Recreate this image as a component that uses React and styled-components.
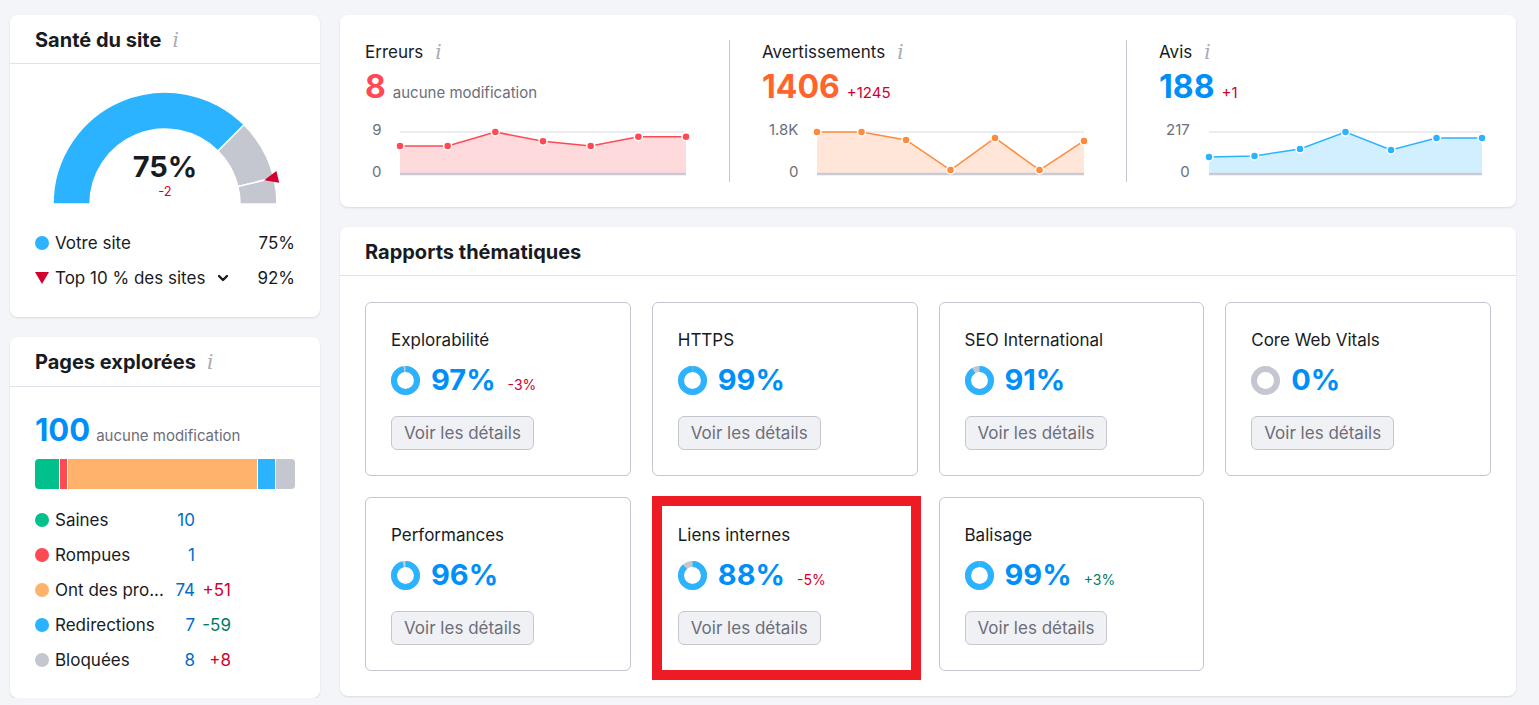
import React from "react";
import styled, { createGlobalStyle } from "styled-components";

const GlobalStyle = createGlobalStyle`
  body {
    margin: 0;
    background: #f4f5f9;
    font-family: Inter, "Noto Sans", sans-serif;
    color: #191b23;
  }
`;

const Page = styled.div`
  display: grid;
  grid-template-columns: 310px 1176px;
  gap: 20px;
  padding: 15px 0 0 10px;
  align-items: start;
`;

const Column = styled.div`
  display: flex;
  flex-direction: column;
  gap: 20px;
`;

const Card = styled.section`
  background: #fff;
  border-radius: 8px;
  box-shadow: 0 1px 2px rgba(25, 27, 35, 0.12);
`;

const CardHeader = styled.header`
  display: flex;
  align-items: center;
  gap: 11px;
  height: 49px;
  padding: 1px 25px 0;
  border-bottom: 1px solid #e0e1e9;
  box-sizing: border-box;
`;

const Title = styled.h2`
  margin: 0;
  font-size: 20px;
  line-height: 24px;
  font-weight: 700;
`;

const Info = styled.span`
  font-family: "DejaVu Serif", serif;
  font-style: italic;
  font-size: ${(p) => p.$size || 20}px;
  color: #a9acb6;
  line-height: 1;
`;

/* ---------- Santé du site ---------- */

const HealthBody = styled.div`
  padding: 28px 25px 27px;
`;

const GaugeWrap = styled.div`
  position: relative;
  width: 226px;
  height: 112px;
  margin: 0 auto;
`;

const GaugeValue = styled.div`
  position: absolute;
  left: 0;
  right: 0;
  top: 57px;
  display: flex;
  flex-direction: column;
  align-items: center;
`;

const BigValue = styled.div`
  font-size: ${(p) => p.$size || 32}px;
  line-height: 36px;
  font-weight: 700;
  color: ${(p) => p.$color || "#191b23"};
`;

const SmallDelta = styled.span`
  font-size: ${(p) => p.$size || 14}px;
  line-height: 16px;
  color: ${(p) => (p.$up ? "#007c65" : "#d1002f")};
`;

const Legend = styled.div`
  display: flex;
  flex-direction: column;
  gap: 11px;
  margin-top: 27px;
`;

const LegendRow = styled.div`
  display: flex;
  align-items: center;
  font-size: 17px;
  line-height: 24px;
`;

const Dot = styled.span`
  width: 14px;
  height: 14px;
  border-radius: 50%;
  background: ${(p) => p.$color};
  margin-right: 6px;
  flex: none;
`;

const DownTri = styled.span`
  width: 0;
  height: 0;
  border-left: 7px solid transparent;
  border-right: 7px solid transparent;
  border-top: 12px solid #d1002f;
  margin-right: 6px;
`;

const Grow = styled.span`
  flex: 1;
  display: flex;
  align-items: center;
  gap: 12px;
`;

const arcPath = (cx, cy, r0, r1, t0, t1) => {
  const p = (r, t) => {
    const a = Math.PI * (1 - t);
    return [cx + r * Math.cos(a), cy - r * Math.sin(a)];
  };
  const [x1, y1] = p(r1, t0);
  const [x2, y2] = p(r1, t1);
  const [x3, y3] = p(r0, t1);
  const [x4, y4] = p(r0, t0);
  return `M${x1} ${y1} A${r1} ${r1} 0 0 1 ${x2} ${y2} L${x3} ${y3} A${r0} ${r0} 0 0 0 ${x4} ${y4} Z`;
};

const Gauge = () => {
  const cx = 113;
  const cy = 112;
  const segs = [
    [0, 0.75, "#2bb3ff"],
    [0.75, 0.925, "#c4c7cf"],
    [0.925, 1, "#c4c7cf"],
  ];
  const a = Math.PI * 0.075;
  const dir = [Math.cos(a), -Math.sin(a)];
  const perp = [Math.sin(a), Math.cos(a)];
  const tip = [cx + 102 * dir[0], cy + 102 * dir[1]];
  const b = [cx + 116 * dir[0], cy + 116 * dir[1]];
  const tri = `${tip[0]},${tip[1]} ${b[0] + 6 * perp[0]},${b[1] + 6 * perp[1]} ${b[0] - 6 * perp[0]},${b[1] - 6 * perp[1]}`;
  return (
    <GaugeWrap>
      <svg width="226" height="112" style={{ overflow: "visible" }}>
        {segs.map(([t0, t1, c]) => (
          <path key={t0} d={arcPath(cx, cy, 75, 112, t0, t1)} fill={c} stroke="#fff" strokeWidth="1.5" />
        ))}
        <polygon points={tri} fill="#d1002f" />
      </svg>
      <GaugeValue>
        <BigValue $size={29}>75%</BigValue>
        <SmallDelta $size={13} style={{ marginTop: -2 }}>-2</SmallDelta>
      </GaugeValue>
    </GaugeWrap>
  );
};

/* ---------- Pages explorées ---------- */

const PagesBody = styled.div`
  padding: 25px 25px 26px;
`;

const NumberRow = styled.div`
  display: flex;
  align-items: baseline;
  gap: 6px;
`;

const Muted = styled.span`
  font-size: 15px;
  color: #6c6e79;
`;

const Bar = styled.div`
  display: flex;
  gap: 1px;
  height: 30px;
  margin-top: 11px;
  border-radius: 4px;
  overflow: hidden;
`;

const BarSeg = styled.div`
  flex: ${(p) => p.$w} 0 0;
  background: ${(p) => p.$color};
`;

const PageLegend = styled.div`
  display: grid;
  grid-template-columns: 14px 113px 21px 30px;
  column-gap: 6px;
  row-gap: 11px;
  align-items: center;
  margin-top: 19px;
  font-size: 17px;
  line-height: 24px;
`;

const Label = styled.span`
  white-space: nowrap;
`;

const Num = styled.span`
  text-align: right;
  color: #006dca;
`;

const Delta = styled.span`
  text-align: right;
  color: ${(p) => (p.$up ? "#007c65" : "#d1002f")};
`;

const pages = [
  { label: "Saines", n: 10, color: "#00c08b", w: 24 },
  { label: "Rompues", n: 1, color: "#ff4953", w: 7 },
  { label: "Ont des pro...", n: 74, d: "+51", color: "#ffb26b", w: 187 },
  { label: "Redirections", n: 7, d: "-59", up: true, color: "#2bb3ff", w: 17 },
  { label: "Bloquées", n: 8, d: "+8", color: "#c4c7cf", w: 19 },
];

/* ---------- Stats ---------- */

const Stats = styled.div`
  display: flex;
  padding: 25px;
`;

const StatCol = styled.div`
  flex: 1;
  height: 142px;
  padding: 0 32px;
  border-left: 1px solid #c4c7cf;
  &:first-child {
    padding-left: 0;
    border-left: none;
  }
  &:last-child {
    padding-right: 0;
  }
`;

const StatTitle = styled.div`
  display: flex;
  align-items: center;
  gap: 12px;
  margin-top: 2px;
  font-size: 17px;
  line-height: 20px;
`;

const StatNumber = styled.div`
  display: flex;
  align-items: baseline;
  gap: 7px;
  height: 36px;
  margin-top: 7px;
`;

const ChartRow = styled.div`
  display: flex;
  align-items: flex-start;
  gap: 19px;
  margin-top: 21px;
`;

const Axis = styled.div`
  display: flex;
  flex-direction: column;
  justify-content: space-between;
  align-items: flex-end;
  height: 58px;
  margin-top: -4px;
  padding-left: 7px;
  font-size: 15px;
  line-height: 16px;
  color: #6c6e79;
`;

const Chart = ({ values, width, line, fill }) => {
  const top = 6;
  const base = 48;
  const pts = values.map((v, i) => [(i / (values.length - 1)) * width, base - v * (base - top)]);
  const l = pts.map((p) => p.join(",")).join(" ");
  return (
    <svg width={width} height="56" style={{ overflow: "visible" }}>
      <line x1="0" x2={width} y1={top} y2={top} stroke="#e6e7ed" strokeWidth="1.5" />
      <polygon points={`0,${base} ${l} ${width},${base}`} fill={fill} />
      <line x1="0" x2={width} y1={base} y2={base} stroke="#c9cad3" strokeWidth="2.5" />
      <polyline points={l} fill="none" stroke={line} strokeWidth="1.5" />
      {pts.map(([x, y], i) => (
        <circle key={i} cx={x} cy={y} r="4" fill={line} stroke="#fff" strokeWidth="1.5" />
      ))}
    </svg>
  );
};

const stats = [
  {
    title: "Erreurs",
    value: "8",
    color: "#ff4953",
    note: "aucune modification",
    max: "9",
    width: 286,
    line: "#ff4953",
    fill: "#ffdadd",
    values: [6, 6, 9, 7, 6, 8, 8].map((v) => v / 9),
  },
  {
    title: "Avertissements",
    value: "1406",
    color: "#ff642d",
    delta: "+1245",
    max: "1.8K",
    width: 267,
    line: "#ff8a3d",
    fill: "#ffe6d9",
    values: [1, 1, 0.81, 0.095, 0.857, 0.095, 0.786],
  },
  {
    title: "Avis",
    value: "188",
    color: "#008ff8",
    delta: "+1",
    max: "217",
    width: 273,
    line: "#2bb3ff",
    fill: "#d2efff",
    values: [0.405, 0.43, 0.595, 1, 0.571, 0.857, 0.857],
  },
];

/* ---------- Rapports thématiques ---------- */

const ReportGrid = styled.div`
  display: grid;
  grid-template-columns: repeat(4, 1fr);
  gap: 21px;
  padding: 26px 25px 25px;
`;

const Report = styled.div`
  position: relative;
  border: 1px solid #c4c7cf;
  border-radius: 6px;
  padding: 27px 25px 25px;
`;

const Highlight = styled.div`
  position: absolute;
  top: -2px;
  left: -1px;
  right: -4px;
  bottom: -10px;
  border: 10px solid #ed1c24;
`;

const ReportTitle = styled.div`
  font-size: 17px;
  line-height: 20px;
`;

const ScoreRow = styled.div`
  display: flex;
  align-items: center;
  height: 36px;
  margin-top: 12px;
`;

const Score = styled.span`
  margin-left: 11px;
  font-size: 29px;
  line-height: 36px;
  font-weight: 700;
  color: #008ff8;
`;

const ScoreDelta = styled(SmallDelta)`
  margin-left: 12px;
  margin-top: 10px;
`;

const DetailsButton = styled.button`
  display: block;
  margin-top: 18px;
  height: 34px;
  padding: 0 12px;
  border: 1px solid #c4c7cf;
  border-radius: 6px;
  background: #f0f1f5;
  font-family: Inter, "Noto Sans", sans-serif;
  font-size: 17px;
  color: #6c6e79;
`;

const Donut = ({ pct }) => {
  const r = 11.5;
  const c = 2 * Math.PI * r;
  return (
    <svg width="29" height="29" viewBox="0 0 29 29">
      <circle cx="14.5" cy="14.5" r={r} fill="none" stroke="#c4c7cf" strokeWidth="6" />
      {pct > 0 && (
        <circle
          cx="14.5"
          cy="14.5"
          r={r}
          fill="none"
          stroke="#2bb3ff"
          strokeWidth="6"
          strokeDasharray={`${(c * pct) / 100} ${c}`}
          transform="rotate(-90 14.5 14.5)"
        />
      )}
    </svg>
  );
};

const reports = [
  { title: "Explorabilité", pct: 97, delta: "-3%" },
  { title: "HTTPS", pct: 99 },
  { title: "SEO International", pct: 91 },
  { title: "Core Web Vitals", pct: 0 },
  { title: "Performances", pct: 96 },
  { title: "Liens internes", pct: 88, delta: "-5%", highlight: true },
  { title: "Balisage", pct: 99, delta: "+3%", up: true },
];

const Chevron = () => (
  <svg width="12" height="8" viewBox="0 0 12 8">
    <path d="M2 2l4 4 4-4" fill="none" stroke="#191b23" strokeWidth="2.4" strokeLinecap="round" strokeLinejoin="round" />
  </svg>
);

export default function App() {
  return (
    <>
      <GlobalStyle />
      <Page>
        <Column>
          <Card>
            <CardHeader>
              <Title>Santé du site</Title>
              <Info>i</Info>
            </CardHeader>
            <HealthBody>
              <Gauge />
              <Legend>
                <LegendRow>
                  <Dot $color="#2bb3ff" />
                  <Grow>Votre site</Grow>
                  <span>75%</span>
                </LegendRow>
                <LegendRow>
                  <DownTri />
                  <Grow>
                    Top 10 % des sites <Chevron />
                  </Grow>
                  <span>92%</span>
                </LegendRow>
              </Legend>
            </HealthBody>
          </Card>
          <Card>
            <CardHeader style={{ height: 50 }}>
              <Title>Pages explorées</Title>
              <Info>i</Info>
            </CardHeader>
            <PagesBody>
              <NumberRow>
                <BigValue $color="#008ff8" $size={31}>100</BigValue>
                <Muted>aucune modification</Muted>
              </NumberRow>
              <Bar>
                {pages.map((p) => (
                  <BarSeg key={p.label} $w={p.w} $color={p.color} />
                ))}
              </Bar>
              <PageLegend>
                {pages.map((p) => (
                  <React.Fragment key={p.label}>
                    <Dot $color={p.color} />
                    <Label>{p.label}</Label>
                    <Num>{p.n}</Num>
                    <Delta $up={p.up}>{p.d}</Delta>
                  </React.Fragment>
                ))}
              </PageLegend>
            </PagesBody>
          </Card>
        </Column>
        <Column>
          <Card>
            <Stats>
              {stats.map((s) => (
                <StatCol key={s.title}>
                  <StatTitle>
                    {s.title} <Info>i</Info>
                  </StatTitle>
                  <StatNumber>
                    <BigValue $color={s.color}>{s.value}</BigValue>
                    {s.note ? <Muted>{s.note}</Muted> : <SmallDelta $size={15}>{s.delta}</SmallDelta>}
                  </StatNumber>
                  <ChartRow>
                    <Axis>
                      <span>{s.max}</span>
                      <span>0</span>
                    </Axis>
                    <Chart values={s.values} width={s.width} line={s.line} fill={s.fill} />
                  </ChartRow>
                </StatCol>
              ))}
            </Stats>
          </Card>
          <Card>
            <CardHeader>
              <Title>Rapports thématiques</Title>
            </CardHeader>
            <ReportGrid>
              {reports.map((r) => (
                <Report key={r.title}>
                  <ReportTitle>{r.title}</ReportTitle>
                  <ScoreRow>
                    <Donut pct={r.pct} />
                    <Score>{r.pct}%</Score>
                    {r.delta && <ScoreDelta $up={r.up}>{r.delta}</ScoreDelta>}
                  </ScoreRow>
                  <DetailsButton>Voir les détails</DetailsButton>
                  {r.highlight && <Highlight />}
                </Report>
              ))}
            </ReportGrid>
          </Card>
        </Column>
      </Page>
    </>
  );
}
